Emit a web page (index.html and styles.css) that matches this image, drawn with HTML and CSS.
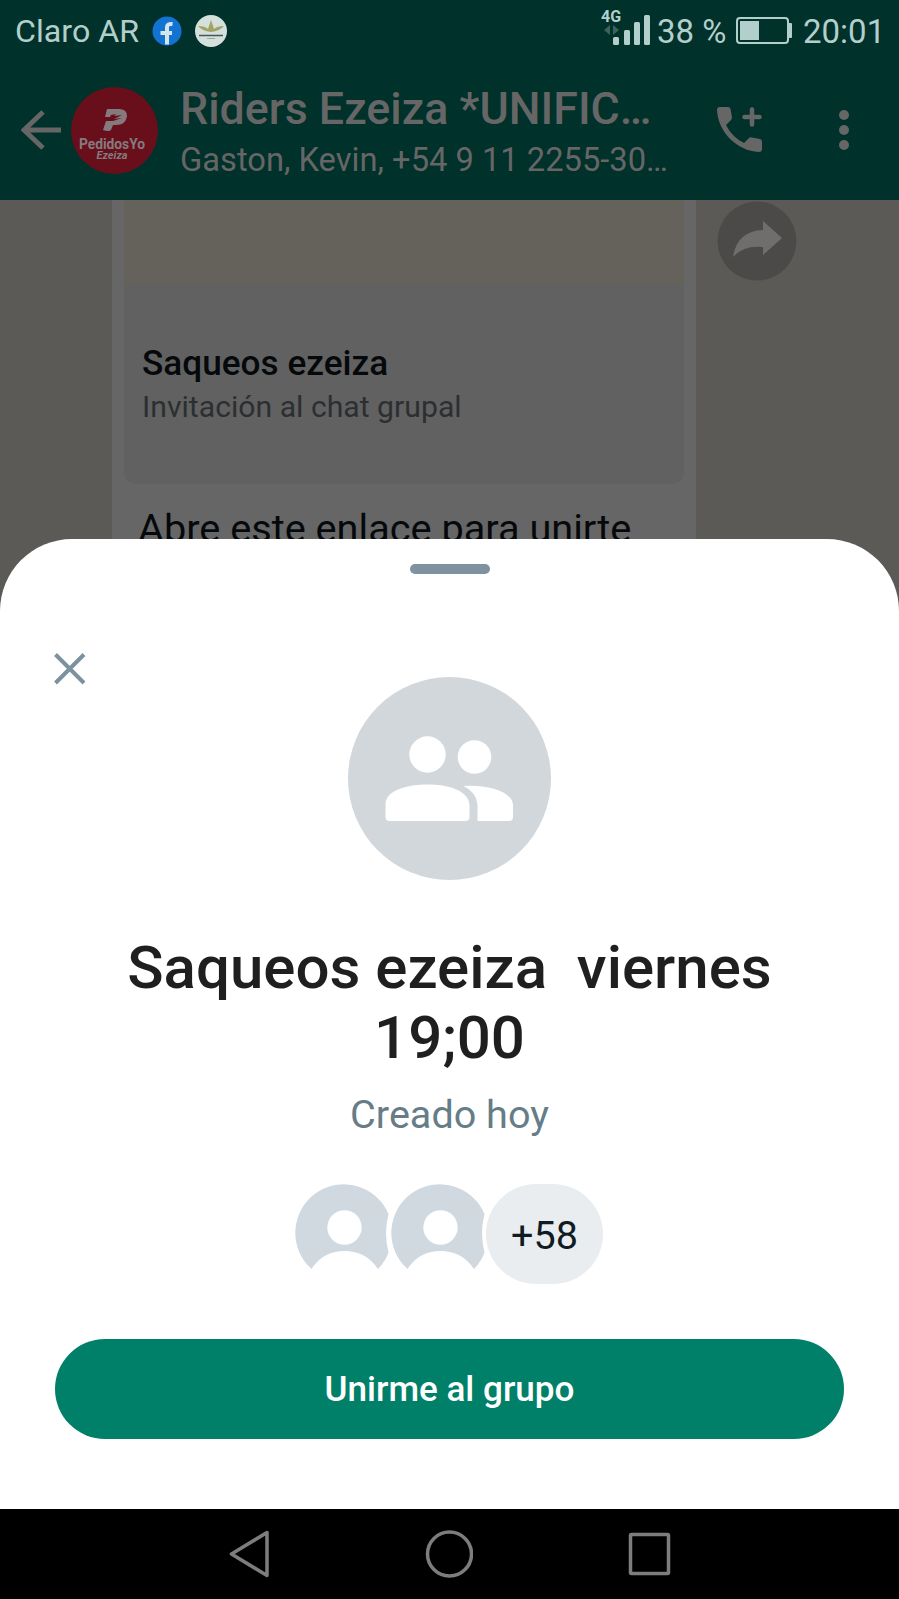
FILE: index.html
```
<!DOCTYPE html>
<html lang="es">
<head>
    <meta charset="UTF-8">
    <meta name="viewport" content="width=device-width, initial-scale=1.0">
    <title>Riders Ezeiza</title>
    <link rel="stylesheet" href="styles.css">
</head>
<body>
    <div class="status-bar">
        <span class="carrier">Claro AR</span>
        <svg class="status-fb" width="30" height="30" viewBox="0 0 30 30">
            <circle cx="15" cy="15" r="14.500" fill="#1273d3"/>
            <path d="M15 28.500V17M8.500 17H20M15 18V11Q15 7.500 20.500 8" fill="none" stroke="#d4e6e8" stroke-width="4"/>
        </svg>
        <svg class="status-app" width="32" height="32" viewBox="0 0 32 32">
            <circle cx="16" cy="16" r="16" fill="#d3e0dc"/>
            <path d="M3 11Q10 11 13 14L16 5L19 14Q22 11 29 11Q25 16 16 17Q7 16 3 11Z" fill="#a3a263"/>
            <path d="M4 20.500H28" stroke="#49564f" stroke-width="1.500"/>
            <path d="M12 23.500H20" stroke="#9aa8a2"/>
        </svg>
        <svg class="signal" width="50" height="40" viewBox="0 0 50 40">
            <text x="0" y="17" class="signal-label">4G</text>
            <path d="M9 20V30L3 25ZM12 20V30L18 25Z" fill="#3d625d"/>
            <rect x="12" y="32" width="6" height="8" rx="1.500"/>
            <rect x="23" y="25" width="6" height="15" rx="1.500"/>
            <rect x="33" y="17" width="6" height="23" rx="1.500"/>
            <rect x="43" y="10" width="6" height="30" rx="1.500"/>
        </svg>
        <span class="percent">38 %</span>
        <svg class="battery" width="56" height="28" viewBox="0 0 56 28">
            <rect x="1" y="1" width="51" height="25" rx="3" fill="none" stroke="#b3cfcb" stroke-width="2"/>
            <rect x="4" y="4" width="19" height="19"/>
            <rect x="52" y="6" width="4" height="15" rx="1"/>
        </svg>
        <span class="clock">20:01</span>
    </div>

    <div class="app-bar">
        <svg class="back" width="40" height="40" viewBox="0 0 40 40">
            <path d="M22 2L3 20L22 38M3 20H40" fill="none" stroke="#666" stroke-width="5"/>
        </svg>
        <div class="group-pic">
            <svg width="26" height="24" viewBox="0 0 26 24">
                <path d="M5 1H17Q25 1 25 8Q24 17 14 17H11L9 22Q7 24 1 22L4 13H11L20 10L12 11L20 7L12 8L14 6L9 7L8 9H3Z" fill="#857b7e"/>
            </svg>
            <span class="pic-name">PedidosYo</span>
            <span class="pic-city">Ezeiza</span>
        </div>
        <div class="group-info">
            <div class="group-title">Riders Ezeiza *UNIFIC…</div>
            <div class="group-members">Gaston, Kevin, +54 9 11 2255-30…</div>
        </div>
        <svg class="call" width="46" height="46" viewBox="0 0 46 46">
            <path d="M3 0H11Q13 0 13.500 2L15 10Q15 12 14 13L9 18Q15 30 27 36L32 31Q33 30 35 30.500L43 32Q45 32.500 45 35V42Q45 45 42 45C20 44 1 25 0 3Q0 0 3 0Z" fill="#666"/>
            <path d="M35 2.500V17.500M27.500 10H42.500" stroke="#666" stroke-width="4.500" stroke-linecap="round"/>
        </svg>
        <svg class="dots" width="10" height="40" viewBox="0 0 10 40">
            <circle cx="5" cy="5" r="5"/>
            <circle cx="5" cy="20" r="5"/>
            <circle cx="5" cy="35" r="5"/>
        </svg>
    </div>

    <div class="chat">
        <div class="bubble">
            <div class="preview">
                <div class="preview-image"></div>
                <div class="preview-title">Saqueos ezeiza</div>
                <div class="preview-sub">Invitación al chat grupal</div>
            </div>
            <div class="message">Abre este enlace para unirte</div>
        </div>
        <svg class="forward" width="80" height="80" viewBox="0 0 80 80">
            <circle cx="40" cy="40" r="39.500" fill="#4b4a48"/>
            <path d="M46 20L65 37L46 54V46Q27 44 16 56Q20 30 46 29Z" fill="#706e6c"/>
        </svg>

        <!-- Bottom sheet -->
        <div class="sheet">
            <div class="handle"></div>
            <div class="sheet-top">
                <svg class="close" width="32" height="32" viewBox="0 0 32 32">
                    <path d="M1.500 1.500L30 30M30 1.500L1.500 30" stroke="#7c929e" stroke-width="4"/>
                </svg>
                <svg class="group-avatar" width="203" height="203" viewBox="0 0 203 203">
                    <circle cx="101.500" cy="101.500" r="101.500" fill="#d1d7db"/>
                    <circle cx="79.500" cy="77.500" r="18.200" fill="#fff"/>
                    <circle cx="126.500" cy="80" r="16.800" fill="#fff"/>
                    <path d="M37.500 127C37.500 113 60 107.500 79.500 107.500C99 107.500 121.500 113 121.500 129V140Q121.500 144 117.500 144H41.500Q37.500 144 37.500 140Z" fill="#fff"/>
                    <path d="M115.500 109C140 107.500 165 115 165 128V140Q165 144 161 144H129.500V128Q128.500 115 115.500 109Z" fill="#fff"/>
                </svg>
            </div>
            <h1 class="invite-title">Saqueos ezeiza&nbsp; viernes 19;00</h1>
            <p class="created">Creado hoy</p>
            <div class="members">
                <svg class="member" width="96" height="100" viewBox="0 0 96 100">
                    <path d="M17.500 86A48.500 48.500 0 1 1 94.500 31Q89.500 50 94.500 69.500Q91 79 84 86Q72 68 50.500 68Q29 68 17.500 86Z" fill="#d0d8e0"/>
                    <circle cx="50.500" cy="44.500" r="17.200" fill="#fff"/>
                </svg>
                <svg class="member" width="96" height="100" viewBox="0 0 96 100">
                    <path d="M17.500 86A48.500 48.500 0 1 1 94.500 31Q89.500 50 94.500 69.500Q91 79 84 86Q72 68 50.500 68Q29 68 17.500 86Z" fill="#d0d8e0"/>
                    <circle cx="50.500" cy="44.500" r="17.200" fill="#fff"/>
                </svg>
                <div class="more">+58</div>
            </div>
            <button class="join">Unirme al grupo</button>
        </div>
    </div>

    <div class="nav-bar">
        <svg width="48" height="50" viewBox="0 0 48 50">
            <path d="M42 3.500V46.500L6.500 25Z"/>
        </svg>
        <svg width="48" height="50" viewBox="0 0 48 50">
            <circle cx="24.500" cy="25" r="22"/>
        </svg>
        <svg width="48" height="50" viewBox="0 0 48 50">
            <rect x="5.500" y="5.500" width="38" height="39" rx="1"/>
        </svg>
    </div>
</body>
</html>
```

FILE: styles.css
```
* {
    margin: 0;
    padding: 0;
    box-sizing: border-box;
}

body {
    width: 899px;
    height: 1599px;
    overflow: hidden;
    display: flex;
    flex-direction: column;
    font-family: Roboto, sans-serif;
    background-color: #000;
}

svg {
    display: block;
    flex-shrink: 0;
}

/* Status bar */
.status-bar {
    height: 62px;
    display: flex;
    align-items: center;
    padding: 0 20px 0 15px;
    background-color: #00312a;
    color: #b3cfcb;
    fill: #b3cfcb;
    font-size: 33px;
    white-space: nowrap;
}

.carrier {
    width: 137px;
    font-size: 32.2px;
}

.status-fb,
.status-app {
    margin-top: -1px;
}

.status-app {
    margin-left: 13px;
}

.signal {
    margin-left: auto;
    margin-top: -12px;
}

.signal-label {
    font-size: 16px;
    font-weight: bold;
}

.percent {
    margin-left: 6px;
    width: 79px;
}

.clock {
    margin-left: 11px;
    width: 76px;
}

/* Chat header */
.app-bar {
    height: 138px;
    display: flex;
    align-items: center;
    padding: 0 0 2px 21px;
    background-color: #00312a;
    color: #666;
    white-space: nowrap;
}

.group-pic {
    width: 87px;
    height: 87px;
    margin-left: 10px;
    padding-top: 21px;
    border-radius: 50%;
    background-color: #690e1b;
    color: #857b7e;
    display: flex;
    flex-direction: column;
    align-items: center;
    font-weight: bold;
}

.pic-name {
    font-size: 13.8px;
    line-height: 14px;
    margin: 5px 5px 0 0;
}

.pic-city {
    font-size: 11px;
    line-height: 9px;
    margin-right: 5px;
    font-style: italic;
}

.group-info {
    width: 537px;
    margin: 8px 0 0 22px;
}

.group-title {
    font-size: 44.8px;
    font-weight: 500;
    line-height: 53px;
}

.group-members {
    font-size: 32.7px;
    line-height: 51px;
}

.dots {
    margin-left: 76px;
    fill: #666;
}

/* Conversation */
.chat {
    height: 1309px;
    position: relative;
    display: flex;
    align-items: flex-start;
    padding-left: 112px;
    background-color: #5c5a57;
}

.bubble {
    width: 584px;
    height: 400px;
    padding: 0 12px;
    background-color: #666;
}

.preview {
    height: 284px;
    border-radius: 0 0 12px 12px;
    background-color: #616161;
}

.preview-image {
    height: 84px;
    margin-bottom: 57px;
    background-color: #65615b;
}

.preview-title {
    padding-left: 18px;
    font-size: 35.2px;
    font-weight: 500;
    line-height: 44px;
    color: #06090b;
}

.preview-sub {
    padding-left: 18px;
    font-size: 30.2px;
    line-height: 43px;
    color: #2c2f31;
}

.message {
    margin-top: 22px;
    padding-left: 14px;
    font-size: 39.7px;
    line-height: 46px;
    color: #06090b;
    white-space: nowrap;
}

.forward {
    margin: 1px 0 0 21px;
}

.sheet {
    position: absolute;
    left: 0;
    right: 0;
    bottom: 0;
    height: 970px;
    padding: 25px 55px 0;
    border-radius: 72px 72px 0 0;
    background-color: #fff;
    text-align: center;
}

.handle {
    width: 80px;
    height: 10px;
    margin: 0 auto;
    border-radius: 5px;
    background-color: #7f929f;
}

.sheet-top {
    display: grid;
    grid-template-columns: 1fr auto 1fr;
    align-items: start;
    margin-top: 79px;
}

.close {
    margin-left: -1px;
}

.group-avatar {
    margin-top: 24px;
}

.invite-title {
    width: 680px;
    margin: 53px auto 0;
    font-size: 60px;
    font-weight: 500;
    line-height: 70px;
    color: #1f1f1f;
}

.created {
    margin-top: 19px;
    font-size: 39.6px;
    line-height: 46px;
    color: #667c87;
}

.members {
    display: flex;
    justify-content: center;
    margin: 46px 2px 0 0;
}

.member {
    margin-top: -1px;
}

.more {
    width: 117px;
    height: 100px;
    border-radius: 50px;
    background-color: #e9edf0;
    color: #111b21;
    font-size: 39.6px;
    line-height: 103px;
}

.join {
    width: 100%;
    height: 100px;
    margin-top: 55px;
    border: none;
    border-radius: 50px;
    background-color: #008069;
    color: #fff;
    font-family: inherit;
    font-size: 35.1px;
    font-weight: 500;
}

/* Android navigation */
.nav-bar {
    height: 90px;
    display: flex;
    justify-content: center;
    align-items: center;
    gap: 152px;
    padding-right: 1px;
    fill: none;
    stroke: #7d7d7d;
    stroke-width: 3.500;
    stroke-linejoin: round;
}
```
